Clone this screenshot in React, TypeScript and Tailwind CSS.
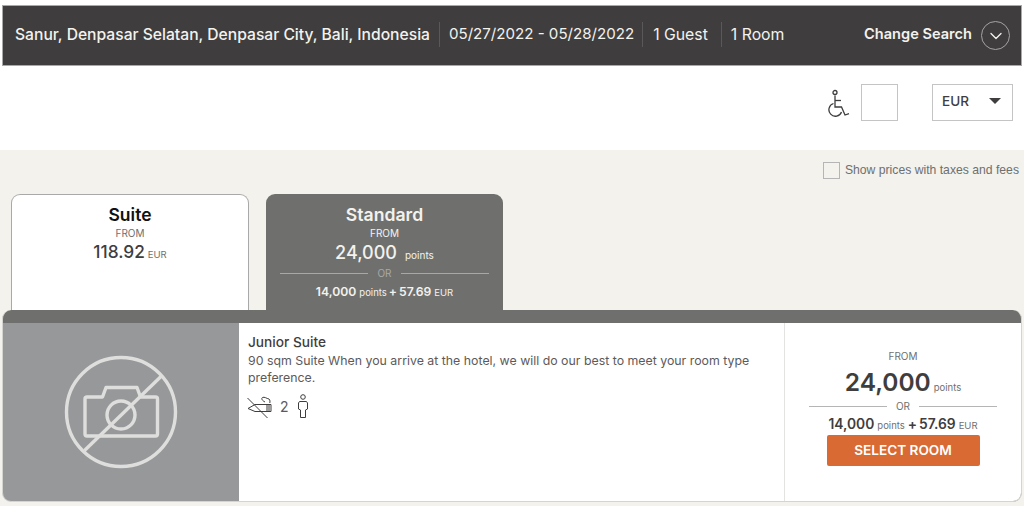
import { ChevronDown } from "lucide-react";

const font = "font-['Inter','Noto_Sans',sans-serif]";

function Divider() {
  return <span className="w-px h-[25px] bg-[#5a5859]" />;
}

function Wheelchair() {
  return (
    <svg width="23" height="28" viewBox="0 0 23 28" fill="none" stroke="#3f3d3e" strokeWidth="1.3" className="block">
      <circle cx="8" cy="3.5" r="2" />
      <path d="M8 6.500V18h6.500l3.500 8 4-1.300" />
      <path d="M8 11.500h6" />
      <path d="M6.500 14.500a6.500 6.500 0 1 0 8 8.500" />
    </svg>
  );
}

function NoCamera() {
  return (
    <svg width="114" height="114" viewBox="0 0 114 114" fill="none" stroke="#dededd" strokeWidth="3.4" strokeLinejoin="round">
      <circle cx="57" cy="57" r="54.5" />
      <path d="M23 42h15.500l3.500-9.500h31l3.500 9.500h15a2 2 0 0 1 2 2v35a2 2 0 0 1-2 2H23a2 2 0 0 1-2-2V44a2 2 0 0 1 2-2z" />
      <circle cx="57" cy="60" r="14" />
      <path d="M20.500 95.500 97.500 21" />
    </svg>
  );
}

function NoSmoking() {
  return (
    <svg width="25" height="24" viewBox="0 0 25 24" fill="none" stroke="#3f3d3e" strokeWidth="1" className="block">
      <path d="M1 13.500 8 9.500h16v7H8L1 13.500z" />
      <path d="M20 9.500v7M22 9.500v7" />
      <path d="M18 7C15 5.500 14 3.500 15.500 2.500c2-1 4 1 6.500 1.500 1.300 1.300 1 2.500.8 4" />
      <path d="M0.500 3 20.500 23" />
    </svg>
  );
}

function Person() {
  return (
    <svg width="12" height="25" viewBox="0 0 12 25" fill="none" stroke="#3f3d3e" strokeWidth="1" className="block">
      <circle cx="6" cy="3" r="2.300" />
      <path d="M2.500 7.500h7l1 1.500v6l-2 1v7.500h-5V16l-2-1V9z" />
    </svg>
  );
}

function OrLine({ line, text }: { line: string; text: string }) {
  return (
    <div className="flex items-center gap-[9px]">
      <span className={`flex-1 h-px ${line}`} />
      <span className={`text-[10px] leading-[12px] ${text}`}>OR</span>
      <span className={`flex-1 h-px ${line}`} />
    </div>
  );
}

export default function App() {
  return (
    <div className={`${font} w-[1024px] h-[506px] overflow-hidden bg-white text-[#3f3d3e]`}>
      <div className="pt-[5px] px-[2px]">
        <div className="h-[61px] bg-[#3f3d3e] border border-[#a9a9a9] flex items-center pl-[12px] pr-[10px] pb-[2px] text-[#f3f2ed]">
          <span className="text-[15.65px] font-medium mr-[9px]">Sanur, Denpasar Selatan, Denpasar City, Bali, Indonesia</span>
          <Divider />
          <span className="text-[15.1px] ml-[9px] mr-[8px]">05/27/2022 - 05/28/2022</span>
          <Divider />
          <span className="text-[15.8px] ml-[10px] mr-[13px]">1 Guest</span>
          <Divider />
          <span className="text-[15.8px] ml-[9px]">1 Room</span>
          <span className="ml-auto text-[14.6px] font-semibold mr-[9px]">Change Search</span>
          <span className="w-[29px] h-[29px] rounded-full border border-[#a5a3a4] flex items-center justify-center mr-[1px] mt-[2px]">
            <ChevronDown size={20} strokeWidth={1.6} className="text-[#f3f2ed]" />
          </span>
        </div>
      </div>

      <div className="h-[84px] flex items-start justify-end pr-[11px] pt-[18px]">
        <span className="mt-[5px] mr-[11px]"><Wheelchair /></span>
        <span className="w-[37px] h-[37px] border border-[#c4c4c4] mr-[34px]" />
        <div className="w-[81px] h-[37px] border border-[#c4c4c4] flex items-center pl-[9px] pr-[11px] pb-[3px] justify-between">
          <span className="text-[13.5px] font-medium">EUR</span>
          <span className="w-0 h-0 border-l-[6px] border-r-[6px] border-t-[6px] border-l-transparent border-r-transparent border-t-[#3f3d3e]" />
        </div>
      </div>

      <div className="bg-[#f3f2ed] h-[356px] pt-[11px]">
        <div className="h-[33px] flex items-start justify-end pr-[5px]">
          <label className="flex items-center gap-[5px] font-['Liberation_Sans',Arial,sans-serif] text-[12.2px] leading-[18px] text-[#6f6f6f]">
            <span className="w-[17px] h-[17px] border border-[#b5b5b5]" />
            Show prices with taxes and fees
          </label>
        </div>

        <div className="flex gap-[17px] pl-[11px] h-[116px]">
          <div className="w-[238px] bg-white border border-b-0 border-[#a9a9a9] rounded-t-[9px] pt-[10px] text-center">
            <div className="text-[17.5px] leading-[20px] font-semibold text-[#111111]">Suite</div>
            <div className="text-[10px] leading-[12px] mt-[2px] text-[#6f6f6f]">FROM</div>
            <div className="mt-[3px] leading-[20px]">
              <span className="text-[17.3px] font-medium">118.92</span>
              <span className="text-[9.5px] text-[#6f6f6f] ml-[3px]">EUR</span>
            </div>
          </div>
          <div className="w-[237px] bg-[#6f706e] rounded-t-[9px] pt-[11px] text-center text-[#f3f2ed]">
            <div className="text-[17.6px] leading-[20px] font-semibold">Standard</div>
            <div className="text-[10px] leading-[12px] mt-[2px]">FROM</div>
            <div className="mt-[2px] leading-[24px]">
              <span className="text-[18px] font-medium">24,000</span>
              <span className="text-[10px] ml-[8px]">points</span>
            </div>
            <div className="mx-[14px]"><OrLine line="bg-[#a8a8a6]" text="text-[#a8a8a6]" /></div>
            <div className="mt-[2px] leading-[18px]">
              <span className="text-[12.2px] font-semibold">14,000</span>
              <span className="text-[9.5px] ml-[3px]">points</span>
              <span className="text-[12.2px] font-semibold ml-[2px]">+</span>
              <span className="text-[12.2px] font-semibold ml-[2px]">57.69</span>
              <span className="text-[9.5px] ml-[3px]">EUR</span>
            </div>
          </div>
        </div>

        <div className="ml-[2px] mr-[2px] h-[192px] rounded-[9px] bg-[#6f706e] pt-[13px] border-x border-b border-[#d5d4d0] overflow-hidden">
          <div className="flex h-[178px] bg-white">
            <div className="w-[236px] bg-[#97989a] flex items-center justify-center">
              <NoCamera />
            </div>
            <div className="w-[546px] border-r border-[#e3e3e1] pl-[9px] pr-[20px] pt-[11px]">
              <div className="text-[13.7px] leading-[17px] font-medium">Junior Suite</div>
              <p className="text-[12.35px] leading-[17px] text-[#5c5a5b] mt-[1px]">
                90 sqm Suite When you arrive at the hotel, we will do our best to meet your room type preference.
              </p>
              <div className="flex items-center mt-[8px] -ml-[1px]">
                <NoSmoking />
                <span className="text-[14px] ml-[8px] mr-[8px] text-[#5c5a5b]">2</span>
                <Person />
              </div>
            </div>
            <div className="flex-1 flex flex-col items-center pt-[27px]">
              <div className="text-[10px] leading-[12px] text-[#6f6f6f]">FROM</div>
              <div className="mt-[7px] leading-[26px]">
                <span className="text-[24.5px] font-semibold">24,000</span>
                <span className="text-[9.5px] text-[#6f6f6f] ml-[3px]">points</span>
              </div>
              <div className="w-[188px] -mt-[1px]"><OrLine line="bg-[#b5b5b5]" text="text-[#6f6f6f]" /></div>
              <div className="mt-[1px] leading-[20px]">
                <span className="text-[13.8px] font-semibold">14,000</span>
                <span className="text-[9.5px] text-[#6f6f6f] ml-[3px]">points</span>
                <span className="text-[13.8px] font-semibold ml-[3px]">+</span>
                <span className="text-[13.8px] font-semibold ml-[2px]">57.69</span>
                <span className="text-[9.5px] text-[#6f6f6f] ml-[3px]">EUR</span>
              </div>
              <button className="w-[153px] h-[31px] -mt-[1px] rounded-[2px] bg-[#d96a33] text-white text-[13.6px] font-semibold pb-[1px]">SELECT ROOM</button>
            </div>
          </div>
        </div>
      </div>
    </div>
  );
}
